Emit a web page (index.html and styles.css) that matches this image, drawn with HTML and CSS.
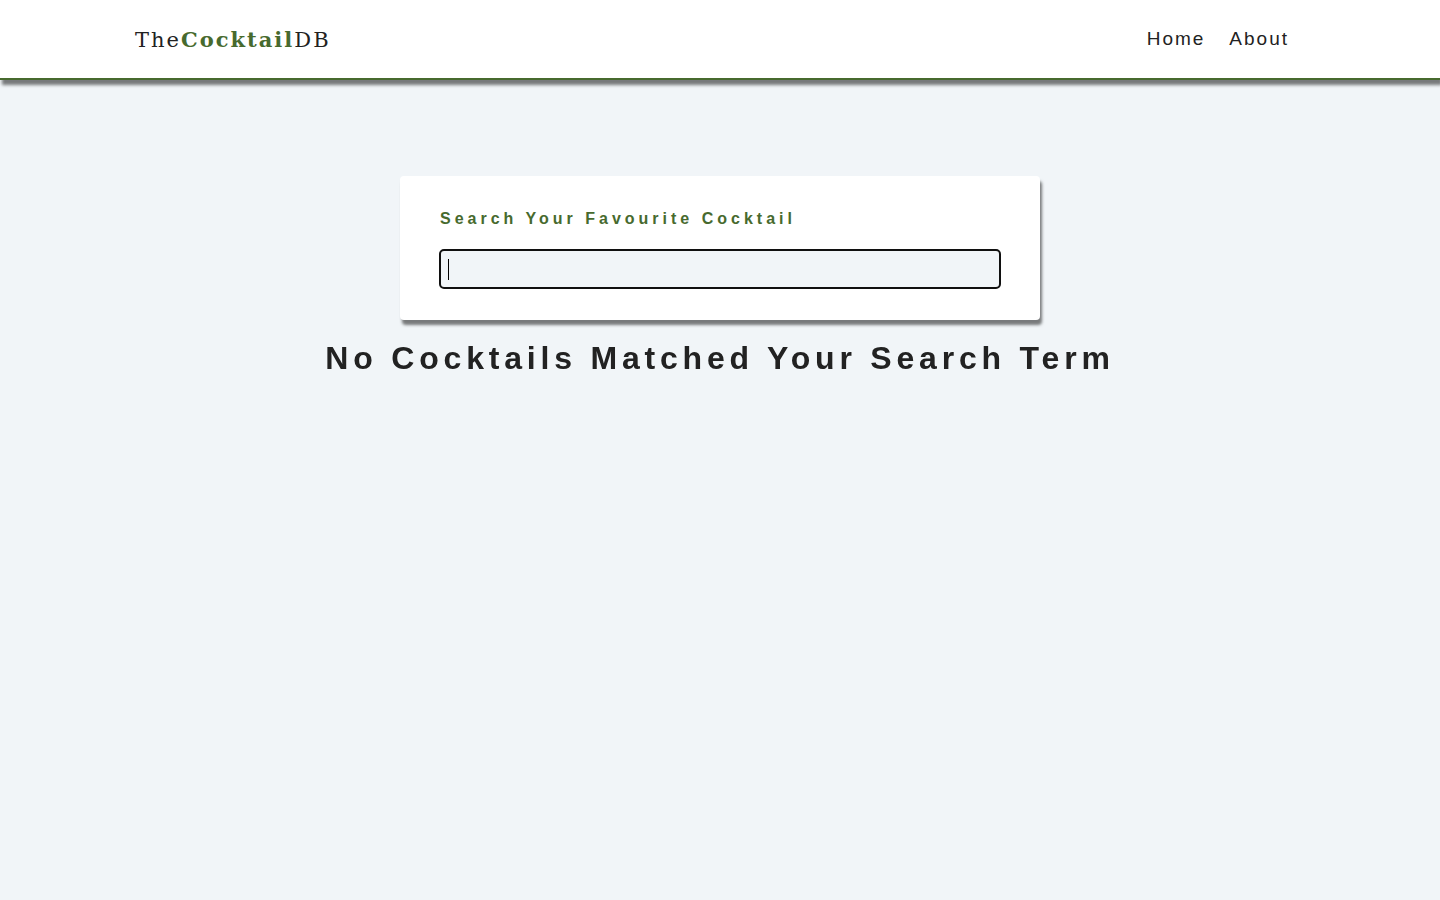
FILE: index.html
```html
<!DOCTYPE html>
<html lang="en">
<head>
  <meta charset="utf-8">
  <meta name="viewport" content="width=device-width, initial-scale=1">
  <title>TheCocktailDB</title>
  <link rel="stylesheet" href="styles.css">
</head>
<body>
  <nav class="navbar">
    <div class="nav-center">
      <a class="logo" href="#">The<strong class="logo-accent">Cocktail</strong>DB</a>
      <ul class="nav-links">
        <li><a class="nav-link" href="#">Home</a></li>
        <li><a class="nav-link" href="#">About</a></li>
      </ul>
    </div>
  </nav>
  <main>
    <section class="search">
      <form class="search-form">
        <label class="search-label" for="name">Search Your Favourite Cocktail</label>
        <input class="search-input" type="text" id="name" name="name" placeholder=" " autocomplete="off" autofocus>
      </form>
    </section>
    <h2 class="message">No Cocktails Matched Your Search Term</h2>
  </main>
</body>
</html>
```

FILE: styles.css
```css
* {
  margin: 0;
  padding: 0;
  box-sizing: border-box;
}

body {
  background: #f1f5f8;
  color: #222;
  font-family: "Liberation Sans", Arial, sans-serif;
  font-size: 16px;
}

.navbar {
  display: flex;
  justify-content: center;
  height: 80px;
  background: #fff;
  border-bottom: 2px solid #476a2e;
  box-shadow: 2px 5px 3px 0 rgba(0, 0, 0, 0.5);
}

.nav-center {
  display: flex;
  align-items: center;
  justify-content: space-between;
  width: 90vw;
  max-width: 1170px;
}

.logo {
  color: #222;
  font-family: "DejaVu Serif", serif;
  font-size: 21px;
  letter-spacing: 2px;
  text-decoration: none;
}

.logo-accent {
  color: #476a2e;
}

.nav-links {
  display: flex;
  gap: 24px;
  padding-right: 16px;
  list-style: none;
}

.nav-link {
  color: #222;
  font-size: 19px;
  letter-spacing: 2px;
  text-decoration: none;
}

.search {
  padding: 96px 0 16px;
}

.search-form {
  width: 85vw;
  max-width: 640px;
  margin: 0 auto;
  padding: 32px 40px;
  background: #fff;
  border-radius: 4px;
  box-shadow: 2px 5px 3px 0 rgba(0, 0, 0, 0.5);
}

.search-label {
  display: block;
  margin-bottom: 20px;
  color: #476a2e;
  font-weight: bold;
  line-height: 22px;
  letter-spacing: 4px;
}

.search-input {
  display: block;
  width: 100%;
  padding: 8px;
  background: #f1f5f8;
  border: none;
  border-radius: 4px;
  font-family: inherit;
  font-size: 19px;
  line-height: 22px;
}

/* Steady insertion mark while the field is empty and focused */
.search-input:focus:placeholder-shown {
  caret-color: transparent;
  background: linear-gradient(#000, #000) 8px 9px / 1px 21px no-repeat #f1f5f8;
}

.message {
  font-size: 32px;
  line-height: 44px;
  letter-spacing: 0.15em;
  text-align: center;
}
```
